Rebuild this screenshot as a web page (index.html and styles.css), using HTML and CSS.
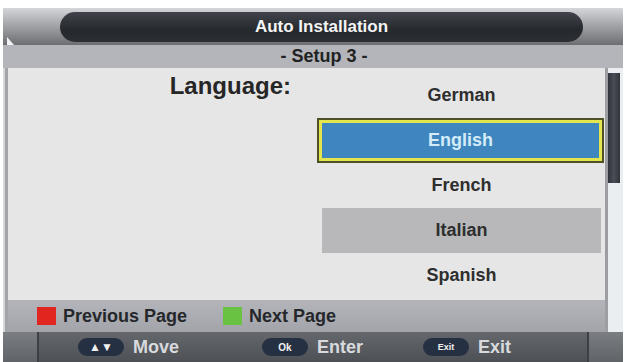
FILE: index.html
```html
<!DOCTYPE html>
<html lang="en">
<head>
    <meta charset="UTF-8">
    <meta name="viewport" content="width=device-width, initial-scale=1.0">
    <title>Auto Installation</title>
    <link rel="stylesheet" href="styles.css">
</head>
<body>

    <div class="screen">
        <div class="title-bar">
            <div class="title-pill">Auto Installation</div>
        </div>
        <div class="subtitle">- Setup 3 -</div>

        <div class="middle">
            <div class="main">
                <div class="content">
                    <div class="label-col">Language:</div>
                    <div class="list">
                        <div class="item">German</div>
                        <div class="item selected">English</div>
                        <div class="item">French</div>
                        <div class="item marked">Italian</div>
                        <div class="item">Spanish</div>
                    </div>
                </div>
                <div class="keys">
                    <span class="key red"></span><span class="key-text">Previous Page</span>
                    <span class="key green"></span><span class="key-text">Next Page</span>
                </div>
            </div>
            <div class="scrollbar">
                <div class="thumb"></div>
            </div>
        </div>

        <div class="help">
            <div class="help-side"></div>
            <div class="help-main">
                <div class="help-item move"><span class="pill arrows">&#9650;&#9660;</span>Move</div>
                <div class="help-item enter"><span class="pill ok">Ok</span>Enter</div>
                <div class="help-item exit"><span class="pill small">Exit</span>Exit</div>
            </div>
            <div class="help-side right"></div>
        </div>
    </div>

</body>
</html>
```

FILE: styles.css
```css
body {
    margin: 0;
    padding: 0;
    background-color: #fff;
    font-family: "Liberation Sans", Arial, sans-serif;
    font-weight: bold;
}

.screen {
    margin: 8px 0 0 3px;
    width: 620px;
    height: 354px;
    display: flex;
    flex-direction: column;
    background-color: #d6d7d9;
}

/* Cabecera */
.title-bar {
    height: 37px;
    box-sizing: border-box;
    padding: 4px 40px 3px 57px;
    background: linear-gradient(#d4d6d9, #a4a6aa 45%, #6c6e72);
    position: relative;
}

.title-bar::before {
    content: "";
    position: absolute;
    left: 4px;
    bottom: 0;
    border-left: 7px solid #f2f2f2;
    border-top: 8px solid transparent;
}

.title-pill {
    height: 30px;
    border-radius: 15px;
    background: linear-gradient(#40434a, #25282d 60%, #2c2f35);
    color: #f4f4f4;
    font-size: 17px;
    line-height: 30px;
    text-align: center;
}

.subtitle {
    height: 23px;
    line-height: 23px;
    background-color: #b3b5ba;
    color: #222;
    font-size: 18px;
    text-align: center;
    padding-left: 22px;
}

/* Zona central */
.middle {
    display: flex;
    height: 264px;
    padding-left: 2px;
}

.main {
    flex: 1;
    display: flex;
    flex-direction: column;
    border-left: 3px solid #a2a4a8;
}

.content {
    height: 232px;
    display: flex;
    background-color: #e6e6e7;
}

.label-col {
    width: 314px;
    box-sizing: border-box;
    padding: 4px 31px 0 0;
    text-align: right;
    font-size: 24px;
    line-height: 28px;
    color: #262626;
}

.list {
    width: 279px;
    padding-top: 5px;
}

.item {
    height: 45px;
    display: flex;
    align-items: center;
    justify-content: center;
    font-size: 18px;
    color: #2e2e2e;
}

.item.selected {
    height: 35px;
    margin: 5px 2px 5px 0;
    background-color: #3f86bf;
    color: #d4ecf8;
    box-shadow: 0 0 0 3px #e2e54e, 0 0 0 5px #4e5028;
}

.item.marked {
    background-color: #b8b8ba;
}

.keys {
    height: 32px;
    display: flex;
    align-items: center;
    padding-left: 29px;
    background: linear-gradient(#b3b5ba, #a2a4a9);
    color: #25272b;
    font-size: 18px;
}

.key {
    width: 19px;
    height: 18px;
    margin-right: 7px;
}

.key.red {
    background-color: #e0261e;
}

.key.green {
    background-color: #6ac243;
}

.key-text {
    margin-right: 36px;
}

.scrollbar {
    width: 15px;
    border-left: 3px solid #9c9ea2;
    background-color: #eaeef1;
    padding-top: 5px;
}

.thumb {
    width: 12px;
    height: 110px;
    background: linear-gradient(90deg, #30333a, #4a4d55 50%, #30333a);
}

/* Barra de ayuda */
.help {
    height: 30px;
    display: flex;
    background: linear-gradient(#64676c, #4d5055);
}

.help-side {
    width: 34px;
    border-right: 2px solid #3c3f44;
    background: linear-gradient(#7a7d82, #606368);
}

.help-side.right {
    border-right: none;
    border-left: 2px solid #3c3f44;
}

.help-main {
    flex: 1;
    display: flex;
    align-items: center;
    padding-left: 39px;
    color: #d8dadd;
    font-size: 18px;
}

.help-item {
    display: flex;
    align-items: center;
}

.move {
    margin-right: 83px;
}

.enter {
    margin-right: 60px;
}

.pill {
    width: 46px;
    height: 18px;
    border-radius: 9px;
    background-color: #263043;
    color: #f0f0f0;
    display: flex;
    align-items: center;
    justify-content: center;
    margin-right: 9px;
}

.pill.arrows {
    font-size: 12px;
    letter-spacing: 0;
}

.pill.ok {
    font-size: 10px;
}

.pill.small {
    font-size: 9px;
}
```
